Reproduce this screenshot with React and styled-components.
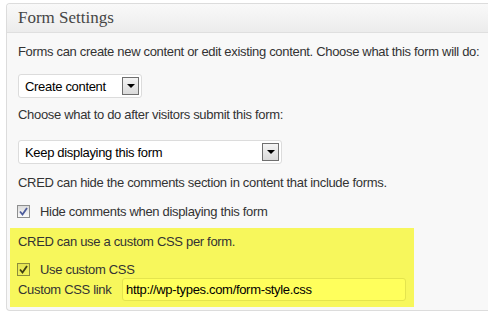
import React from "react";
import styled, { createGlobalStyle } from "styled-components";

const Global = createGlobalStyle`
  html, body { margin: 0; padding: 0; background: #ffffff; }
  body { font-family: "Liberation Sans", Arial, sans-serif; font-size: 13px; letter-spacing: -0.32px; color: #333; overflow: hidden; }
`;

const Panel = styled.div`
  margin: 3px 0 0 6px;
  width: 482px;
  height: 308px;
  border: 1px solid #dcdcdc;
  border-right: none;
  border-radius: 4px 0 0 4px;
  background: #f8f8f8;
  box-sizing: border-box;
  overflow: hidden;
`;

const Header = styled.div`
  height: 29px;
  box-sizing: border-box;
  padding-left: 11px;
  display: flex;
  align-items: center;
  background: linear-gradient(#f9f9f9, #ececec);
  border-bottom: 1px solid #dfdfdf;
  font-family: "Liberation Serif", Georgia, serif;
  font-size: 17px;
  letter-spacing: 0;
  color: #464646;
`;

const Body = styled.div`
  padding: 11px 0 0 11px;
  display: flex;
  flex-direction: column;
  align-items: flex-start;
`;

const Text = styled.div`
  line-height: 16px;
  margin-top: ${(p) => p.$mt || 0}px;
  white-space: nowrap;
`;

const Select = styled.div`
  margin-top: ${(p) => p.$mt || 0}px;
  width: ${(p) => p.$w}px;
  height: 24px;
  box-sizing: border-box;
  border: 1px solid #dcdcdc;
  border-radius: 3px;
  background: #fff;
  display: flex;
  align-items: center;
  justify-content: space-between;
  padding: 0 2px 0 6px;
  color: #000;
`;

const ArrowBtn = styled.div`
  width: 17px;
  height: 18px;
  box-sizing: border-box;
  border: 1px solid #6f6f6f;
  background: linear-gradient(#f4f4f4, #dadada);
  display: flex;
  align-items: center;
  justify-content: center;
  &::after {
    content: "";
    border-left: 4px solid transparent;
    border-right: 4px solid transparent;
    border-top: 4px solid #000;
  }
`;

const CheckRow = styled.div`
  margin-top: ${(p) => p.$mt || 0}px;
  display: flex;
  align-items: center;
  height: 16px;
  gap: 10px;
  margin-left: -1px;
`;

const Box = styled.span`
  width: 13px;
  height: 13px;
  box-sizing: border-box;
  border: 1px solid ${(p) => (p.$hl ? "#8c8c3c" : "#8e8f8f")};
  background: ${(p) => (p.$hl ? "linear-gradient(#e4e452, #f0f05a)" : "linear-gradient(#dcdcdc, #fbfbfb)")};
  display: flex;
  align-items: center;
  justify-content: center;
`;

const Highlight = styled.div`
  margin: 9px 0 0 -8px;
  width: 404px;
  box-sizing: border-box;
  padding: 6px 8px 6px 8px;
  background: #f7f75c;
  display: flex;
  flex-direction: column;
`;

const LinkRow = styled.div`
  margin-top: 1px;
  display: flex;
  align-items: center;
`;

const Label = styled.span`
  width: 104px;
  flex-shrink: 0;
  white-space: nowrap;
`;

const Input = styled.div`
  width: 284px;
  height: 23px;
  box-sizing: border-box;
  border: 1px solid #e4e44e;
  border-radius: 3px;
  background: #ffff5c;
  display: flex;
  align-items: center;
  padding-left: 3px;
  color: #000;
  white-space: nowrap;
`;

const Check = ({ color }) => (
  <svg width="9" height="9" viewBox="0 0 9 9">
    <path d="M1 4.5 L3.5 7.5 L8 1" fill="none" stroke={color} strokeWidth="1.8" />
  </svg>
);

export default function App() {
  return (
    <>
      <Global />
      <Panel>
        <Header>Form Settings</Header>
        <Body>
          <Text>Forms can create new content or edit existing content. Choose what this form will do:</Text>
          <Select $mt={14} $w={124}>
            <span>Create content</span>
            <ArrowBtn />
          </Select>
          <Text $mt={9}>Choose what to do after visitors submit this form:</Text>
          <Select $mt={17} $w={264}>
            <span>Keep displaying this form</span>
            <ArrowBtn />
          </Select>
          <Text $mt={11}>CRED can hide the comments section in content that include forms.</Text>
          <CheckRow $mt={12}>
            <Box><Check color="#4d5c9c" /></Box>
            <span>Hide comments when displaying this form</span>
          </CheckRow>
          <Highlight>
            <Text>CRED can use a custom CSS per form.</Text>
            <CheckRow $mt={11}>
              <Box $hl><Check color="#3f3f14" /></Box>
              <span>Use custom CSS</span>
            </CheckRow>
            <LinkRow>
              <Label>Custom CSS link</Label>
              <Input>http://wp-types.com/form-style.css</Input>
            </LinkRow>
          </Highlight>
        </Body>
      </Panel>
    </>
  );
}
